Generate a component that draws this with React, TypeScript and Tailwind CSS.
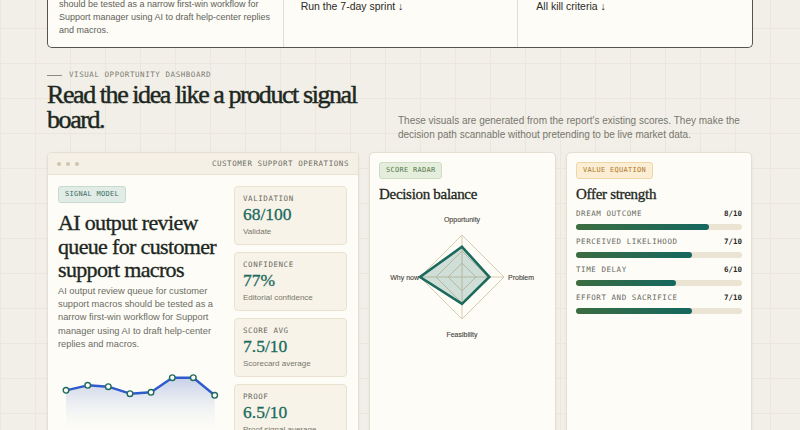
import React from 'react';

const serif = "font-['Liberation_Serif',serif]";
const mono = "font-['DejaVu_Sans_Mono',monospace]";
const sans = "font-['Liberation_Sans',sans-serif]";

interface Stat {
  label: string;
  value: string;
  caption: string;
}

const stats: Stat[] = [
  { label: 'VALIDATION', value: '68/100', caption: 'Validate' },
  { label: 'CONFIDENCE', value: '77%', caption: 'Editorial confidence' },
  { label: 'SCORE AVG', value: '7.5/10', caption: 'Scorecard average' },
  { label: 'PROOF', value: '6.5/10', caption: 'Proof signal average' },
];

const offer = [
  { label: 'DREAM OUTCOME', score: 8 },
  { label: 'PERCEIVED LIKELIHOOD', score: 7 },
  { label: 'TIME DELAY', score: 6 },
  { label: 'EFFORT AND SACRIFICE', score: 7 },
];

const trend = [
  [8, 29.3],
  [29.7, 24.3],
  [50.3, 25.7],
  [72, 32.7],
  [93, 31.3],
  [114.3, 16.7],
  [135.3, 16.7],
  [156.7, 34.3],
];

function TrendChart() {
  const line = trend.map(([x, y]) => `${x},${y}`).join(' ');
  const area = `8,70 ${line} 156.7,70`;
  return (
    <svg width="166" height="70" viewBox="0 0 166 70" className="block">
      <defs>
        <linearGradient id="trendFill" x1="0" y1="0" x2="0" y2="1">
          <stop offset="0%" stopColor="#c3cde8" stopOpacity="0.95" />
          <stop offset="100%" stopColor="#fdfcf7" stopOpacity="0.2" />
        </linearGradient>
      </defs>
      <polygon points={area} fill="url(#trendFill)" />
      <polyline points={line} fill="none" stroke="#2f5bcc" strokeWidth="2.4" strokeLinejoin="round" />
      {trend.map(([x, y], i) => (
        <circle key={i} cx={x} cy={y} r="2.8" fill="#fdfcf7" stroke="#1f6b5d" strokeWidth="1.4" />
      ))}
    </svg>
  );
}

function Radar() {
  const cx = 83;
  const cy = 67;
  const R = 42;
  const ring = (k: number) =>
    `${cx},${cy - R * k} ${cx + R * k},${cy} ${cx},${cy + R * k} ${cx - R * k},${cy}`;
  // opportunity, problem, feasibility, why now
  const v = [0.72, 0.65, 0.64, 1];
  const data = `${cx},${cy - R * v[0]} ${cx + R * v[1]},${cy} ${cx},${cy + R * v[2]} ${cx - R * v[3]},${cy}`;
  return (
    <svg width="167" height="134" viewBox="0 0 167 134" className="block">
      {[1, 0.62, 0.33].map((k) => (
        <polygon key={k} points={ring(k)} fill="none" stroke="#d8cbb0" strokeWidth="1" />
      ))}
      <line x1={cx} y1={cy - R} x2={cx} y2={cy + R} stroke="#d8cbb0" strokeWidth="1" />
      <line x1={cx - R} y1={cy} x2={cx + R} y2={cy} stroke="#d8cbb0" strokeWidth="1" />
      <polygon points={data} fill="#1d6b5e" fillOpacity="0.2" stroke="#1b6a5d" strokeWidth="2.6" strokeLinejoin="miter" />
      <g fontFamily="Liberation Sans, sans-serif" fontSize="7" fill="#3f3f3a" stroke="#3f3f3a" strokeWidth="0.1">
        <text x={cx} y="11.5" textAnchor="middle">Opportunity</text>
        <text x="129" y="69.5">Problem</text>
        <text x="40" y="69.5" textAnchor="end">Why now</text>
        <text x={cx} y="126.5" textAnchor="middle">Feasibility</text>
      </g>
    </svg>
  );
}

export default function App() {
  return (
    <div
      className={`${sans} w-[800px] h-[430px] overflow-hidden bg-[#f2efe8] bg-[linear-gradient(to_right,#ebe7de_1px,transparent_1px),linear-gradient(to_bottom,#ebe7de_1px,transparent_1px)] bg-[size:35px_35px] bg-[position:0_28px]`}
    >
      <div className="mx-[47px] w-[706px]">
        {/* Summary card (scrolled past its top) */}
        <div className="grid grid-cols-3 border-x border-b border-[#55554e] rounded-b-[5px] bg-[#fdfcf7] -mt-[2px] pb-[10px]">
          <div className="px-[11px] text-[9px] leading-[13px] text-[#5f5f57] whitespace-nowrap">
            <div>should be tested as a narrow first-win workflow for</div>
            <div>Support manager using AI to draft help-center replies</div>
            <div>and macros.</div>
          </div>
          <div className="border-l border-[#e3ddcf] px-[17px] -mb-[10px]">
            <div className="text-[10.5px] leading-[14px] text-[#2b2b27] mt-[1px]">Run the 7-day sprint ↓</div>
          </div>
          <div className="border-l border-[#e3ddcf] px-[18px] -mb-[10px]">
            <div className="text-[10.5px] leading-[14px] text-[#2b2b27] mt-[1px]">All kill criteria ↓</div>
          </div>
        </div>

        {/* Section header */}
        <div className="flex items-start justify-between mt-[22px]">
          <div>
            <div className="flex items-center gap-[7px] h-[10px]">
              <span className="block w-[15px] h-px bg-[#8c8c80]" />
              <span className={`${mono} text-[7.5px] leading-[10px] tracking-[0.075em] text-[#7d7d72]`}>
                VISUAL OPPORTUNITY DASHBOARD
              </span>
            </div>
            <h2 className={`${serif} text-[26px] leading-[25px] tracking-[-0.055em] text-[#1d2721] [-webkit-text-stroke:0.45px_#1d2721] mt-[2px]`}>
              Read the idea like a product signal
              <br />
              board.
            </h2>
          </div>
          <p className="w-[355px] mt-[44px] text-[10px] leading-[14px] text-[#77776c]">
            These visuals are generated from the report's existing scores. They make the decision path scannable without pretending to be live market data.
          </p>
        </div>

        {/* Dashboard cards */}
        <div className="grid grid-cols-[312px_187px_186px] gap-[10px] mt-[10px] items-start">
          {/* Signal model */}
          <div className="rounded-[5px] border border-[#e4dfd2] bg-[#fdfcf7] shadow-[0_1px_3px_rgba(60,50,30,0.06)] h-[300px] overflow-hidden">
            <div className="flex items-center justify-between h-[22px] px-[9px] bg-[#f4f0e6] border-b border-[#e8e2d3]">
              <div className="flex gap-[5px]">
                <span className="w-[4px] h-[4px] rounded-full bg-[#cfc5ae]" />
                <span className="w-[4px] h-[4px] rounded-full bg-[#cfc5ae]" />
                <span className="w-[4px] h-[4px] rounded-full bg-[#cfc5ae]" />
              </div>
              <span className={`${mono} text-[7.5px] tracking-[0.075em] text-[#6f6f66]`}>
                CUSTOMER SUPPORT OPERATIONS
              </span>
            </div>
            <div className="grid grid-cols-[166px_113px] gap-[10px] pl-[10px] pt-[11px]">
              <div>
                <div className={`${mono} flex w-fit items-center h-[17px] px-[6px] rounded-[3px] border border-[#c5dad0] bg-[#e1ece6] text-[7px] tracking-[0.04em] text-[#3b6e62]`}>
                  SIGNAL MODEL
                </div>
                <h3 className={`${serif} text-[22px] leading-[23.5px] tracking-[-0.03em] text-[#1d2721] [-webkit-text-stroke:0.35px_#1d2721] mt-[8px]`}>
                  AI output review queue for customer support macros
                </h3>
                <p className="text-[9.3px] leading-[13.4px] text-[#6c6c63] mt-[3px]">
                  AI output review queue for customer support macros should be tested as a narrow first-win workflow for Support manager using AI to draft help-center replies and macros.
                </p>
                <div className="mt-[9px]">
                  <TrendChart />
                </div>
              </div>
              <div className="flex flex-col gap-[7px]">
                {stats.map((s) => (
                  <div key={s.label} className="rounded-[4px] border border-[#e9e2cf] bg-[#f7f3e8] px-[8px] pt-[7px] pb-[7px] h-[59px]">
                    <div className={`${mono} text-[7.5px] leading-[10px] tracking-[0.075em] text-[#6a6a62]`}>{s.label}</div>
                    <div className={`${serif} text-[17.5px] leading-[18px] text-[#1b6a5d] [-webkit-text-stroke:0.3px_#1b6a5d] mt-[1px]`}>{s.value}</div>
                    <div className="text-[8px] leading-[11px] text-[#77776c] mt-[3px]">{s.caption}</div>
                  </div>
                ))}
              </div>
            </div>
          </div>

          {/* Score radar */}
          <div className="rounded-[5px] border border-[#e4dfd2] bg-[#fdfcf7] shadow-[0_1px_3px_rgba(60,50,30,0.06)] h-[300px] px-[9px] pt-[9px]">
            <div className={`${mono} flex w-fit items-center h-[17px] px-[6px] rounded-[3px] border border-[#cfdcc4] bg-[#e5eedd] text-[7px] tracking-[0.04em] text-[#56794b]`}>
              SCORE RADAR
            </div>
            <div className={`${serif} text-[15px] leading-[18px] tracking-[-0.02em] text-[#1d2721] [-webkit-text-stroke:0.3px_#1d2721] mt-[6px]`}>Decision balance</div>
            <div className="mt-[7px]">
              <Radar />
            </div>
          </div>

          {/* Value equation */}
          <div className="rounded-[5px] border border-[#e4dfd2] bg-[#fdfcf7] shadow-[0_1px_3px_rgba(60,50,30,0.06)] h-[300px] px-[9px] pt-[9px]">
            <div className={`${mono} flex w-fit items-center h-[17px] px-[6px] rounded-[3px] border border-[#efd7a6] bg-[#fbeed4] text-[7px] tracking-[0.04em] text-[#b07826]`}>
              VALUE EQUATION
            </div>
            <div className={`${serif} text-[15px] leading-[18px] tracking-[-0.02em] text-[#1d2721] [-webkit-text-stroke:0.3px_#1d2721] mt-[6px]`}>Offer strength</div>
            <div className="flex flex-col gap-[7px] mt-[6px]">
              {offer.map((o) => (
                <div key={o.label}>
                  <div className="flex justify-between items-center h-[10px]">
                    <span className={`${mono} text-[7.5px] tracking-[0.075em] text-[#6a6a62]`}>{o.label}</span>
                    <span className={`${mono} text-[7.5px] font-bold text-[#2b2b27]`}>{o.score}/10</span>
                  </div>
                  <div className="h-[6px] rounded-full bg-[#ebe4d3] mt-[5px]">
                    <div
                      className="h-full rounded-full bg-[linear-gradient(to_right,#3c6d40,#15675f)]"
                      style={{ width: `${o.score * 10}%` }}
                    />
                  </div>
                </div>
              ))}
            </div>
          </div>
        </div>
      </div>
    </div>
  );
}
